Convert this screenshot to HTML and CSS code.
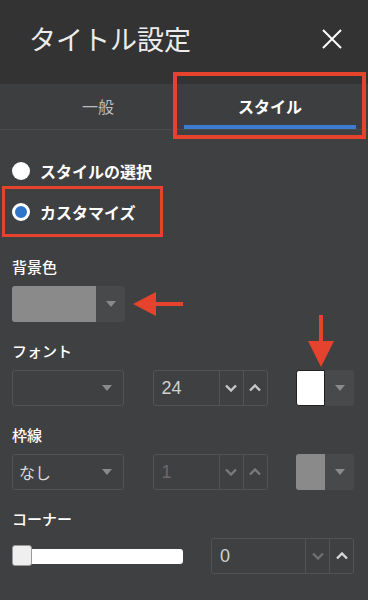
FILE: index.html
```html
<!DOCTYPE html>
<html lang="ja">
  <head>
    <meta charset="UTF-8" />
    <meta name="viewport" content="width=device-width, initial-scale=1.0" />
    <title>タイトル設定</title>
    <link rel="stylesheet" href="styles.css">
  </head>
  <body>
    <div class="panel">
      <!-- header -->
      <header class="panel-head">
        <h1 class="panel-title">タイトル設定</h1>
        <button class="close-btn">
          <svg width="20" height="20" viewBox="0 0 20 20"><path d="M1 1L19 19M19 1L1 19" stroke="#fff" stroke-width="2" fill="none"/></svg>
        </button>
      </header>

      <!-- tabs -->
      <nav class="tabs">
        <div class="tab">一般</div>
        <div class="tab tab-active">スタイル</div>
      </nav>

      <div class="panel-body">
        <div class="radio-group">
          <label class="radio-row"><span class="radio"></span>スタイルの選択</label>
          <label class="radio-row"><span class="radio radio-on"></span>カスタマイズ</label>
        </div>

        <div class="field">
          <div class="field-label">背景色</div>
          <div class="field-row">
            <div class="color-pick color-wide">
              <span class="swatch swatch-gray"></span>
              <span class="pick-btn"><i class="tri"></i></span>
            </div>
          </div>
        </div>

        <div class="field">
          <div class="field-label">フォント</div>
          <div class="field-row">
            <div class="select"><span></span><i class="tri"></i></div>
            <div class="num">
              <span class="num-val">24</span>
              <span class="num-btn"><svg width="12" height="8" viewBox="0 0 12 8"><path d="M1 1.5L6 6.5L11 1.5" stroke="#c8c8c8" stroke-width="2.4" fill="none"/></svg></span>
              <span class="num-btn"><svg width="12" height="8" viewBox="0 0 12 8"><path d="M1 6.5L6 1.5L11 6.5" stroke="#c8c8c8" stroke-width="2.4" fill="none"/></svg></span>
            </div>
            <div class="color-pick">
              <span class="swatch swatch-white"></span>
              <span class="pick-btn"><i class="tri"></i></span>
            </div>
          </div>
        </div>

        <div class="field">
          <div class="field-label">枠線</div>
          <div class="field-row">
            <div class="select"><span>なし</span><i class="tri"></i></div>
            <div class="num">
              <span class="num-val num-off">1</span>
              <span class="num-btn"><svg width="12" height="8" viewBox="0 0 12 8"><path d="M1 1.5L6 6.5L11 1.5" stroke="#7a7a7a" stroke-width="2.4" fill="none"/></svg></span>
              <span class="num-btn"><svg width="12" height="8" viewBox="0 0 12 8"><path d="M1 6.5L6 1.5L11 6.5" stroke="#7a7a7a" stroke-width="2.4" fill="none"/></svg></span>
            </div>
            <div class="color-pick">
              <span class="swatch swatch-gray"></span>
              <span class="pick-btn"><i class="tri"></i></span>
            </div>
          </div>
        </div>

        <div class="field">
          <div class="field-label">コーナー</div>
          <div class="field-row">
            <div class="slider"><span class="slider-thumb"></span></div>
            <div class="num num-wide">
              <span class="num-val">0</span>
              <span class="num-btn"><svg width="12" height="8" viewBox="0 0 12 8"><path d="M1 1.5L6 6.5L11 1.5" stroke="#6f6f6f" stroke-width="2.4" fill="none"/></svg></span>
              <span class="num-btn"><svg width="12" height="8" viewBox="0 0 12 8"><path d="M1 6.5L6 1.5L11 6.5" stroke="#d8d8d8" stroke-width="2.4" fill="none"/></svg></span>
            </div>
          </div>
        </div>
      </div>

      <!-- annotations -->
      <div class="mark mark-tab"></div>
      <div class="mark mark-radio"></div>
      <svg class="arrow arrow-left" width="50" height="24" viewBox="0 0 50 24"><polygon points="0,12 23,0 23,24" fill="#e5432d"/><rect x="22" y="10" width="28" height="4" fill="#e5432d"/></svg>
      <svg class="arrow arrow-down" width="26" height="52" viewBox="0 0 26 52"><rect x="11" y="0" width="4" height="28" fill="#e5432d"/><polygon points="0,26 26,26 13,52" fill="#e5432d"/></svg>
    </div>
  </body>
</html>
```

FILE: styles.css
```css
*{
    padding: 0;
    margin: 0;
    box-sizing: border-box;
}
body{
    background: #3f4042;
    font-family: "Noto Sans CJK JP", sans-serif;
    color: #fff;
}
.panel{
    position: relative;
    width: 368px;
    height: 600px;
    background: #3f4042;
    overflow: hidden;
}

/* header */
.panel-head{
    height: 84px;
    background: #333333;
    display: flex;
    align-items: center;
    justify-content: space-between;
    padding: 0 26px 6px 29px;
}
.panel-title{
    font-size: 27px;
    font-weight: 400;
    line-height: 36px;
    color: #ececec;
}
.close-btn{
    width: 20px;
    height: 20px;
    background: none;
    border: 0;
    display: flex;
}

/* tabs */
.tabs{
    display: flex;
    height: 46px;
    padding: 0 12px;
    background: #3d3e40;
    border-bottom: 1px solid #4a4b4d;
}
.tab{
    flex: 1;
    display: flex;
    align-items: center;
    justify-content: center;
    padding-top: 3px;
    font-size: 16px;
    color: #bdbdbd;
    border-bottom: 4px solid transparent;
}
.tab-active{
    color: #fff;
    font-weight: bold;
    border-bottom-color: #3b7bd1;
}

/* body */
.panel-body{
    padding: 20px 14px 0 12px;
}
.radio-group{
    margin-bottom: 25px;
}
.radio-row{
    display: flex;
    align-items: center;
    gap: 10px;
    height: 41px;
    font-size: 16px;
    font-weight: bold;
}
.radio{
    width: 18px;
    height: 18px;
    border-radius: 50%;
    background: #fff;
}
.radio-on{
    background: #2f74c9;
    border: 3.5px solid #fff;
}

.field + .field{
    margin-top: 19px;
}
.field-label{
    font-size: 15px;
    font-weight: 500;
    line-height: 20px;
    margin-bottom: 9px;
}
.field-row{
    display: flex;
    align-items: center;
    justify-content: space-between;
    height: 36px;
}

/* dropdown triangle */
.tri{
    display: block;
    width: 0;
    height: 0;
    border-left: 5px solid transparent;
    border-right: 5px solid transparent;
    border-top: 6px solid #8a8a8a;
}

.select{
    width: 112px;
    height: 36px;
    border: 1px solid #525356;
    border-radius: 3px;
    display: flex;
    align-items: center;
    justify-content: space-between;
    padding: 0 11px 0 6px;
    font-size: 16px;
    color: #dcdcdc;
}

.num{
    width: 115px;
    height: 36px;
    border: 1px solid #525356;
    border-radius: 3px;
    display: flex;
}
.num-wide{
    width: 143px;
}
.num-val{
    flex: 1;
    display: flex;
    align-items: center;
    padding-left: 8px;
    font-family: "Liberation Sans", sans-serif;
    font-size: 18px;
    color: #d0d0d0;
}
.num-off{
    color: #6a6a6a;
}
.num-btn{
    width: 24px;
    border-left: 1px solid #525356;
    display: flex;
    align-items: center;
    justify-content: center;
}

.color-pick{
    width: 58px;
    height: 36px;
    display: flex;
}
.color-wide{
    width: 113px;
}
.swatch{
    flex: 1;
    border-radius: 3px 0 0 3px;
}
.swatch-gray{
    background: #8a8a8a;
}
.swatch-white{
    background: #fff;
    border: 1px solid #222;
}
.pick-btn{
    width: 29px;
    background: #48494b;
    border-radius: 0 3px 3px 0;
    display: flex;
    align-items: center;
    justify-content: center;
}

.slider{
    position: relative;
    width: 171px;
    height: 15px;
    background: #fff;
    border-radius: 3px;
}
.slider-thumb{
    position: absolute;
    left: 0;
    top: -4px;
    width: 20px;
    height: 21px;
    background: #efefef;
    border: 1px solid #9a9a9a;
    border-radius: 3px;
}

/* annotations */
.mark{
    position: absolute;
    border: 4px solid #e5432d;
}
.mark-tab{
    left: 173px;
    top: 72px;
    width: 193px;
    height: 67px;
}
.mark-radio{
    left: 2px;
    top: 186px;
    width: 161px;
    height: 51px;
    border-width: 3px;
}
.arrow{
    position: absolute;
}
.arrow-left{
    left: 133px;
    top: 292px;
}
.arrow-down{
    left: 308px;
    top: 315px;
}
```
